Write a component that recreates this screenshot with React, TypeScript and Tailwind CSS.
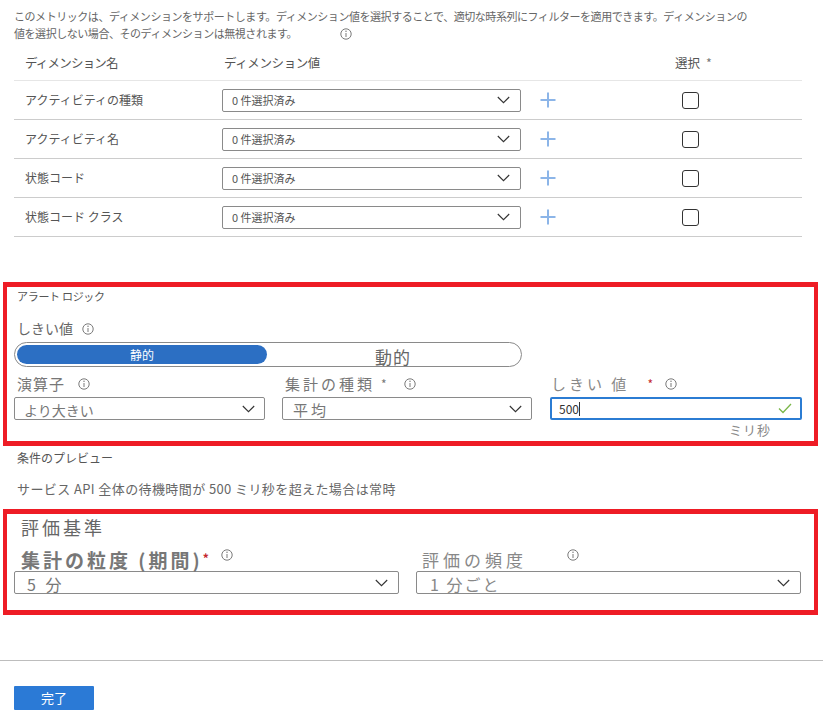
import React from "react";

const Info = ({ className = "" }: { className?: string }) => (
  <svg width="12" height="12" viewBox="0 0 12 12" className={className}>
    <circle cx="6" cy="6" r="5.2" fill="none" stroke="#7a7a7a" strokeWidth="1" />
    <rect x="5.5" y="5" width="1" height="4" fill="#7a7a7a" />
    <circle cx="6" cy="3.3" r="0.75" fill="#7a7a7a" />
  </svg>
);

const Chevron = () => (
  <svg width="13" height="8" viewBox="0 0 13 8" className="shrink-0">
    <path d="M0.8 1 L6.5 6.7 L12.2 1" stroke="#333" fill="none" strokeWidth="1.1" />
  </svg>
);

const Plus = () => (
  <svg width="16" height="16" viewBox="0 0 16 16">
    <path d="M8 0.5 V15.5 M0.5 8 H15.5" stroke="#8cb5e8" strokeWidth="2" fill="none" />
  </svg>
);

const Check = () => (
  <svg width="14" height="11" viewBox="0 0 14 11">
    <path d="M1 5.5 L5 9.5 L13 1" stroke="#7ab648" strokeWidth="1.3" fill="none" />
  </svg>
);

const rows = ["アクティビティの種類", "アクティビティ名", "状態コード", "状態コード クラス"];

export default function App() {
  return (
    <div className="w-[823px] h-[725px] bg-white overflow-hidden font-['Noto_Sans_CJK_JP','Noto_Sans',sans-serif] text-[#555]">
      {/* intro */}
      <div className="pt-[8px] pl-[14px] text-[11px] leading-[17px] text-[#666] whitespace-nowrap tracking-[-0.45px]">
        <div>このメトリックは、ディメンションをサポートします。ディメンション値を選択することで、適切な時系列にフィルターを適用できます。ディメンションの</div>
        <div className="flex items-center">
          <span>値を選択しない場合、そのディメンションは無視されます。</span>
          <Info className="ml-[43px]" />
        </div>
      </div>

      {/* table */}
      <div className="ml-[14px] w-[788px] mt-[5px]">
        <div className="h-[34px] flex items-center border-b border-[#e6e6e6] text-[12.5px] text-[#555]">
          <div className="w-[208px] pl-[11px] tracking-[-0.8px]">ディメンション名</div>
          <div className="w-[453px] pl-[2px] tracking-[-0.4px]">ディメンション値</div>
          <div>
            選択<span className="ml-[6px] text-[#777]">*</span>
          </div>
        </div>
        {rows.map((r) => (
          <div key={r} className="h-[39px] flex items-center border-b border-[#cccccc]">
            <div className="w-[208px] pl-[11px] text-[12px] text-[#555]">{r}</div>
            <div className="w-[299px] h-[23px] border border-[#8a8a8a] rounded-[2px] flex items-center justify-between pl-[9px] pr-[10px] text-[11px] text-[#555]">
              <span>0 件選択済み</span>
              <Chevron />
            </div>
            <div className="ml-[19px] w-[16px] h-[16px] flex">
              <Plus />
            </div>
            <div className="ml-[126px] w-[17px] h-[17px] border-[1.5px] border-[#333] rounded-[3px]" />
          </div>
        ))}
      </div>

      {/* alert logic box */}
      <div className="mt-[45px] ml-[3px] w-[815px] h-[164px] border-x-[4px] border-y-[5px] border-[#ee1c25] box-border">
        <div className="pl-[10px] mt-[1px] text-[11px] leading-[16px] text-[#555] tracking-[-0.3px]">アラート ロジック</div>
        <div className="pl-[10px] mt-[14px] flex items-center h-[20px] text-[14px] text-[#666]">
          <span>しきい値</span>
          <Info className="ml-[9px] mt-[2px]" />
        </div>
        <div className="ml-[7px] mt-[4px] w-[508px] h-[25px] border border-[#8a8a8a] rounded-full p-[2px] flex items-center">
          <div className="w-[250px] h-[19px] rounded-full bg-[#2c6fc3] text-white text-[12px] flex items-center justify-center">静的</div>
          <div className="flex-1 text-center text-[17px] text-[#666] pt-[4px] tracking-[1px]">動的</div>
        </div>
        <div className="ml-[7px] mt-[7px] flex gap-[17px]">
          <div className="w-[251px]">
            <div className="h-[20px] flex items-center pl-[3px] text-[15px] text-[#777] tracking-[1px]">
              <span>演算子</span>
              <Info className="ml-[13px]" />
            </div>
            <div className="mt-[3px] h-[23px] border border-[#8a8a8a] rounded-[2px] flex items-center justify-between pl-[9px] pr-[9px]">
              <span className="text-[14px] text-[#777] pt-[3px]">より大きい</span>
              <Chevron />
            </div>
          </div>
          <div className="w-[250px]">
            <div className="h-[20px] flex items-center pl-[3px] text-[15px] text-[#777] tracking-[3px]">
              <span>集計の種類</span>
              <span className="ml-[6px] text-[12px]">*</span>
              <Info className="ml-[14px]" />
            </div>
            <div className="mt-[3px] h-[23px] border border-[#8a8a8a] rounded-[2px] flex items-center justify-between pl-[10px] pr-[9px]">
              <span className="text-[15px] text-[#777] tracking-[3px] pt-[3px]">平均</span>
              <Chevron />
            </div>
          </div>
          <div className="w-[252px] ml-[1px]">
            <div className="h-[20px] flex items-center pl-[1px] text-[15px] text-[#888]">
              <span className="tracking-[3px]">しきい 値</span>
              <span className="ml-[18px] text-[12px] text-[#c4262e]">*</span>
              <Info className="ml-[12px]" />
            </div>
            <div className="mt-[3px] h-[23px] border-2 border-[#2b7cd3] rounded-[2px] flex items-center justify-between pl-[7px] pr-[8px]">
              <span className="text-[12px] text-[#333] flex items-center">
                500<span className="inline-block w-[1px] h-[14px] bg-[#333]" />
              </span>
              <Check />
            </div>
            <div className="mt-[2px] pl-[179px] text-[13px] leading-[16px] text-[#888] tracking-[1px]">ミリ秒</div>
          </div>
        </div>
      </div>

      {/* preview */}
      <div className="mt-[4px] pl-[17px] text-[12px] leading-[16px] text-[#555]">条件のプレビュー</div>
      <div className="mt-[14px] pl-[17px] text-[13px] leading-[18px] text-[#666] tracking-[0.4px]">サービス API 全体の待機時間が 500 ミリ秒を超えた場合は常時</div>

      {/* evaluation box */}
      <div className="mt-[11px] ml-[3px] w-[815px] h-[106px] border-x-[4px] border-y-[5px] border-[#ee1c25] box-border">
        <div className="pl-[14px] mt-[1px] text-[18px] leading-[24px] text-[#666] tracking-[3px]">評価基準</div>
        <div className="ml-[7px] mt-[7px] flex gap-[17px]">
          <div className="w-[385px]">
            <div className="h-[25px] flex items-end pl-[7px] text-[19px] leading-[22px] text-[#777] font-bold">
              <span className="tracking-[3px]">集計の粒度 (期間)</span>
              <span className="text-[12px] text-[#c4262e] self-start mt-[1px]">*</span>
              <Info className="ml-[12px] self-start mt-[3px]" />
            </div>
            <div className="h-[23px] border border-[#8a8a8a] rounded-[2px] flex items-center justify-between pl-[12px] pr-[10px]">
              <span className="text-[16px] leading-[20px] text-[#777] tracking-[3px] pt-[2px]">5 分</span>
              <Chevron />
            </div>
          </div>
          <div className="w-[385px]">
            <div className="h-[25px] flex items-end pl-[6px] text-[17px] leading-[22px] text-[#888]">
              <span className="tracking-[4px]">評価の頻度</span>
              <Info className="ml-[40px] self-start mt-[3px]" />
            </div>
            <div className="h-[23px] border border-[#8a8a8a] rounded-[2px] flex items-center justify-between pl-[13px] pr-[10px]">
              <span className="text-[16px] leading-[20px] text-[#888] tracking-[2px] pt-[2px]">1 分ごと</span>
              <Chevron />
            </div>
          </div>
        </div>
      </div>

      {/* footer */}
      <div className="mt-[45px] h-[1px] bg-[#bdbdbd] w-full" />
      <div className="mt-[25px] ml-[14px] w-[80px] h-[24px] bg-[#2b7ad6] rounded-[1px] text-white text-[13px] flex items-center justify-center">完了</div>
    </div>
  );
}
